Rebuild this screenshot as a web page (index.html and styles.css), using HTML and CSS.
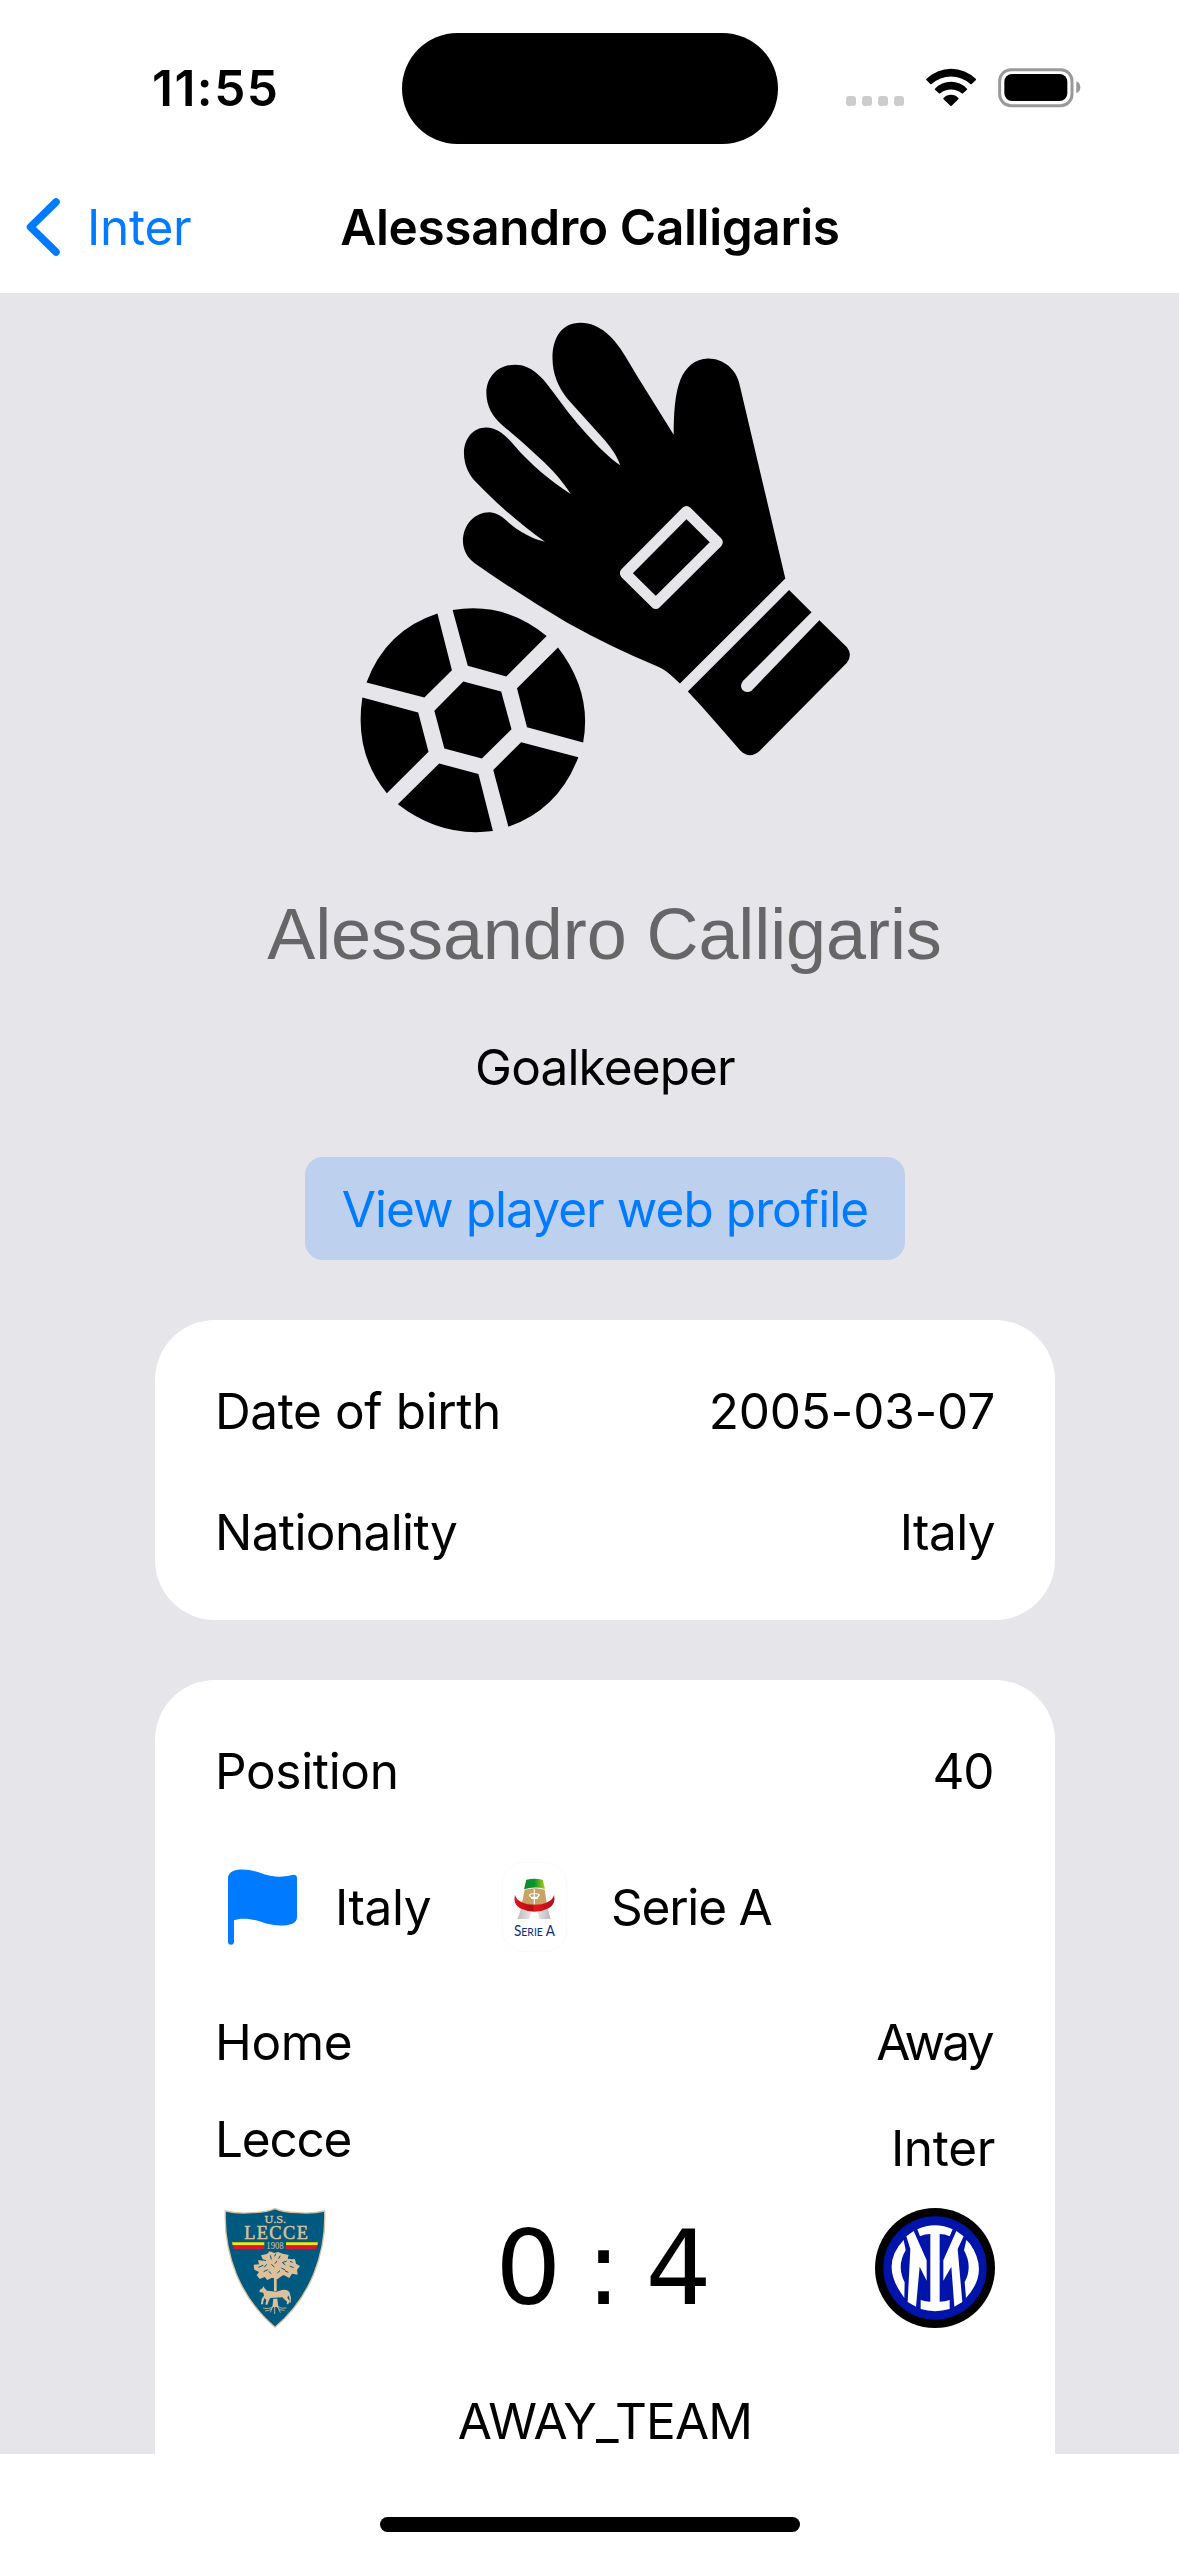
FILE: index.html
```html
<!DOCTYPE html>
<html lang="en">
<head>
<meta charset="utf-8">
<title>Alessandro Calligaris</title>
<link rel="stylesheet" href="styles.css">
</head>
<body>
<div class="screen">
  <header>
    <div class="status">
      <span class="time">11:55</span>
      <span class="island"></span>
      <div class="indicators">
        <svg class="dots" viewBox="48 54 174 120"><rect x="48" y="138" width="30" height="30" rx="9"/><rect x="96" y="138" width="30" height="30" rx="9"/><rect x="144" y="138" width="30" height="30" rx="9"/><rect x="192" y="138" width="30" height="30" rx="9"/></svg>
        <svg class="wifi" viewBox="289 54 151 120"><path d="M290 87A106 106 0 0 1 439 87Q440 88 439 90L426 102Q424 104 422 102A87 87 0 0 0 306 102Q304 104 302 102L290 90Q289 88 290 87ZM316 116A66 66 0 0 1 412 116Q414 117 412 119L400 130Q398 132 396 130A51 51 0 0 0 332 130Q330 132 328 130L316 119Q314 117 316 116ZM342 144A30 30 0 0 1 386 144Q388 146 386 148L366 167Q364 169 362 167L342 148Q340 146 342 144Z"/></svg>
        <svg class="battery" viewBox="506 54 249 120"><rect class="shell" x="511" y="59" width="217" height="108" rx="34"/><rect x="525" y="72" width="189" height="81" rx="23"/><path class="nub" d="M741 94Q753 99 753 112Q753 125 741 130Z"/></svg>
      </div>
    </div>
    <nav class="nav">
      <a class="back"><svg class="chevron" viewBox="0 0 34 58"><path d="M30 4 4.500 29 30 54"/></svg><span>Inter</span></a>
      <h1 class="title">Alessandro Calligaris</h1>
    </nav>
  </header>

  <main>
    <div class="content">
      <svg class="portrait" viewBox="0 0 1568 1568" preserveAspectRatio="none">
        <path d="M987 1074L1293 780L1160 236C1152 195 1113 164 1069 164C1030 164 1003 190 989 222C972 262 969 320 969 377L864 215L828 157C798 108 755 64 699 64C642 64 617 108 617 163C617 205 633 243 659 275L769 393C788 415 805 438 814 463C783 443 748 409 716 375C680 337 646 294 616 254C590 218 556 181 509 181C458 181 425 216 425 260C425 297 443 328 473 352C510 381 547 413 585 447C616 475 647 507 670 543C616 511 550 457 507 408C484 382 458 357 424 357C387 357 360 388 360 429C360 462 375 490 394 509C450 566 520 625 595 677C560 670 512 645 485 619C469 604 451 594 434 594C391 594 357 629 357 675C357 699 370 723 391 737Q520 824 660 904Q790 974 919 1025C945 1034 967 1056 987 1074Z"/>
        <path class="patch" d="M1006 592L1096 678L917 850L828 765Z"/>
        <path d="M1304 812L1369 874L1170 1067Q1160 1079 1168 1091Q1180 1103 1195 1094L1392 897L1472 972Q1489 992 1472 1016L1219 1262Q1190 1287 1163 1262L1085 1176Q1048 1134 1010 1096Z"/>
        <path d="M327 868Q480 844 600 941L483 1054L371 1024ZM283 878L325 1037L245 1113L77 1071Q133 925 283 878ZM65 1113L227 1155L257 1265L136 1381Q40 1268 65 1113ZM168 1412L288 1298L402 1327L444 1487Q294 1506 168 1412ZM489 1475L445 1316L526 1238L692 1280Q635 1426 489 1475ZM706 1239L543 1196L514 1087L633 973Q733 1098 706 1239ZM358 1068L468 1096L498 1202L412 1284L303 1256L274 1150Z"/>
      </svg>
      <h2 class="name">Alessandro Calligaris</h2>
      <p class="role">Goalkeeper</p>
      <a class="profile">View player web profile</a>

      <section class="card bio">
        <div class="row"><span class="dob">Date of birth</span><span class="date">2005-03-07</span></div>
        <div class="row"><span class="nationality">Nationality</span><span class="nation">Italy</span></div>
      </section>

      <section class="card game">
        <div class="row"><span class="label">Position</span><span class="shirt">40</span></div>
        <div class="league">
          <svg class="flag" viewBox="39 43 207 228"><path d="M57 197V261Q56 270 48 270Q39 270 39 261V70Q39 56 55 49C80 39 116 47 139 56C169 68 202 69 227 62Q246 56 246 71V186Q246 201 232 207C205 217 169 212 140 202C111 192 77 188 57 197Z"/></svg>
          <span class="country">Italy</span>
          <svg class="serie" viewBox="7 8 195 270">
            <defs><linearGradient id="green"><stop offset="0" stop-color="#16852f"/><stop offset=".5" stop-color="#09972f"/><stop offset="1" stop-color="#b9cd16"/></linearGradient><linearGradient id="red"><stop offset="0" stop-color="#e31218"/><stop offset=".45" stop-color="#b90d12"/><stop offset=".5" stop-color="#e5161b"/><stop offset="1" stop-color="#b20e14"/></linearGradient><linearGradient id="grey"><stop offset="0" stop-color="#bbb"/><stop offset=".4" stop-color="#e5e5e8"/><stop offset=".6" stop-color="#e5e5e8"/><stop offset="1" stop-color="#b5b6ba"/></linearGradient></defs>
            <rect class="plate" x="8" y="9" width="193" height="268" rx="65"/>
            <path fill="url(#grey)" d="M65 145H98L88 179H54ZM112 145H143L153 179H119Z"/>
            <path fill="#c7a367" d="M75 91Q105 82 135 91L141 130Q106 147 67 130Z"/>
            <path fill="url(#green)" d="M80 61Q105 55 129 61L136 89Q105 80 73 90Z"/>
            <path fill="url(#red)" d="M46 106C53 146 157 146 163 106Q170 132 147 147Q105 168 61 147Q39 132 46 106Z"/>
            <path class="lace" d="M104 90V135M89 106Q104 99 119 106Q112 119 104 112Q94 119 89 106M94 117H115"/>
            <text class="serie-name" x="43" y="231" textLength="123" lengthAdjust="spacingAndGlyphs">S<tspan class="small">ERIE</tspan> A</text>
          </svg>
          <span class="competition">Serie A</span>
        </div>
        <div class="row sides"><span class="label">Home</span><span class="away">Away</span></div>
        <div class="match">
          <div class="team">
            <span class="lecce">Lecce</span>
            <svg class="crest" viewBox="15 53 360 360">
              <path class="shield" d="M46 62Q83 71 127 67Q171 66 195 55Q219 66 263 67Q307 71 344 62Q348 160 311 252Q271 347 195 411Q119 347 79 252Q42 160 46 62Z"/>
              <text class="us" x="196" y="99" textLength="65" lengthAdjust="spacingAndGlyphs">U.S.</text>
              <text class="town" x="198" y="145" textLength="191" lengthAdjust="spacing">LECCE</text>
              <path fill="#f5e900" d="M66 156H163V165H68ZM228 156H324L322 165H228Z"/><path fill="#dc1632" d="M68 165H163V177H71ZM228 165H322L319 177H228Z"/>
              <text class="year" x="195" y="177" textLength="52" lengthAdjust="spacingAndGlyphs">1908</text>
              <path class="tree" d="M153 195l18-4 8-8 14 5 11-3 14 5 18 4-3 12 22 1 3 13 12 7-9 12 2 14-17-3-8 13-17-9-10 6-9 7-16-5-14 7-8-9-15 6-9-11 7-10-14-7-2-15 16-1-3-13 16 2z"/>
              <path class="tree" d="M192 245H200V303H192ZM190 325H202L205 350H187Z"/>
              <path class="tree" d="M149 299L157 294L160 288L164 294L171 301L199 304L216 299Q233 296 239 307Q245 321 242 337H239Q240 325 235 315L232 322L239 332L235 342H230L231 334L223 327L217 321L181 323L177 330L172 343H166L169 329L163 323L159 337L160 342H153L155 326L162 316L160 307L149 305Z"/>
              <path class="roots" d="M188 348Q178 358 159 353M190 349Q180 363 165 362M194 347V371M199 348Q210 363 224 360M201 347Q213 357 229 353M187 351L181 366M204 351L211 367"/>
              <path class="notches" d="M154 207l14 4M181 195l3 12M211 196l-5 9M230 212l-13 5M145 231l15-6M184 222l9 8M214 233l12 6M239 227l12 5M161 244l12-6M201 212l-6 8M202 248l8-7M235 246l-10-4M170 222l-7 9M197 190l-3 8M176 243l8 7M218 217l8 7M240 213l8 3"/>
            </svg>
          </div>
          <span class="score">0 : 4</span>
          <div class="team right">
            <span class="label">Inter</span>
            <svg class="crest" viewBox="45 53 360 360">
              <circle cx="225" cy="233" r="180"/><circle class="disc" cx="225" cy="233" r="155"/>
              <path class="mono" d="M172 117Q225 92 278 117L269 138Q254 131 239 131V334Q254 334 269 329V356Q225 369 182 356V329Q196 334 211 334V131Q195 131 180 138ZM139 138L161 122L200 210V271L179 229L168 349L143 335L151 176ZM311 138L289 122L250 210V271L274 229L283 349L307 335L293 176ZM131 149Q64 219 121 305L133 323L134 276Q109 226 137 180ZM319 149L312 180Q339 229 314 276L318 323Q389 245 330 160Z"/>
            </svg>
          </div>
        </div>
        <p class="winner">AWAY_TEAM</p>
      </section>
    </div>
  </main>
  <footer><span class="home-bar"></span></footer>
</div>
</body>
</html>
```
FILE: styles.css
```css
* { box-sizing: border-box; }
body { margin: 0; background: #fff; color: #000; font: 400 49.5px/60px Inter, "Liberation Sans", sans-serif; }
h1, h2, p { margin: 0; font-weight: 400; }
svg { display: block; flex: none; }
.screen { width: 1179px; height: 2556px; display: flex; flex-direction: column; overflow: hidden; }

/* status bar and navigation */
header { height: 293px; flex: none; }
.status { height: 144px; padding-top: 33px; padding-left: 152px; display: flex; align-items: center; }
.time { width: 250px; margin-top: -1px; font-weight: 600; letter-spacing: 1.5px; }
.island { width: 376px; height: 111px; border-radius: 56px; background: #000; }
.indicators { display: flex; margin: -1px 0 0 68px; }
.dots { width: 58px; height: 40px; fill: #ccc; }
.wifi { width: 50.300px; height: 40px; margin-left: 22px; }
.battery { width: 83px; height: 40px; margin-left: 22px; }
.shell { fill: none; stroke: #999; stroke-width: 9; }
.nub { fill: #999; }
.nav { height: 149px; padding: 16px 26px 0; display: grid; grid-template-columns: 1fr auto 1fr; align-items: center; }
.back { display: flex; align-items: center; gap: 27px; color: #007aff; letter-spacing: -.28px; }
.chevron { width: 34px; height: 58px; fill: none; stroke: #007aff; stroke-width: 7.500; stroke-linecap: round; stroke-linejoin: round; }
.title { font-size: 49.5px; font-weight: 600; letter-spacing: -.36px; margin-left: 1px; }

/* player */
main { height: 2161px; flex: none; background: #e5e5ea; overflow: hidden; }
.content { width: 900px; margin-left: 155px; padding-top: 7px; display: flex; flex-direction: column; align-items: center; }
.portrait { width: 540px; height: 560px; margin-left: 10px; }
.patch { fill: none; stroke: #e5e5ea; stroke-width: 31; stroke-linejoin: round; }
.name { margin: 32px 1px 0 0; font: 72px/84px "Liberation Sans", Arial, sans-serif; letter-spacing: -.09px; color: #666; }
.role { margin-top: 61px; letter-spacing: -.87px; }
.profile { margin-top: 60px; width: 600px; height: 103px; padding-top: 22px; border-radius: 18px; background: #bdd1ef; color: #007aff; text-align: center; letter-spacing: -.93px; }

/* cards */
.card { width: 900px; margin-top: 60px; padding: 61px 60px 0; border-radius: 60px; background: #fff; }
.bio { height: 300px; display: flex; flex-direction: column; gap: 61px; }
.game { height: 900px; }
.row { display: flex; justify-content: space-between; }
.label { letter-spacing: -.33px; }
.dob { letter-spacing: -.4px; }
.date { letter-spacing: -.2px; }
.nationality { letter-spacing: -.61px; }
.nation { letter-spacing: -.6px; }
.shirt { letter-spacing: -1.4px; padding-right: 2px; }
.league { height: 90px; margin-top: 61px; padding-left: 13px; display: flex; align-items: center; }
.flag { width: 69px; height: 76px; fill: #007aff; }
.country { width: 167px; margin-left: 38px; letter-spacing: -.45px; }
.serie { width: 65px; height: 90px; }
.plate { fill: #fff; stroke: #f6f6f6; stroke-width: 2; }
.lace { fill: none; stroke: #fff; stroke-width: 3.500; }
.serie-name { font: 44px Lato, sans-serif; fill: #0b2f80; }
.small { font-size: 34px; }
.competition { margin: -1px 0 0 44px; letter-spacing: -1.22px; }
.sides { margin-top: 60px; }
.away { letter-spacing: -2.6px; padding-right: 3px; }
.match { margin-top: 37px; display: flex; justify-content: space-between; align-items: flex-end; }
.team { width: 150px; display: flex; flex-direction: column; gap: 39px; }
.right { align-items: flex-end; gap: 30px; }
.lecce { letter-spacing: -1.23px; }
.crest { width: 120px; height: 120px; }
.score { margin-right: 3px; font: 104px/120px "DejaVu Sans", Verdana, sans-serif; word-spacing: -8.500px; white-space: nowrap; }
.winner { margin-top: 63px; text-align: center; letter-spacing: -.82px; }

/* club crests */
.shield { fill: #005a80; stroke: #dcc09a; stroke-width: 4; }
.us, .town, .year { fill: #dcc09a; font-family: "Liberation Serif", serif; text-anchor: middle; }
.us { font-size: 33px; stroke: #dcc09a; }
.town { font-size: 55px; stroke: #dcc09a; stroke-width: 1.500; }
.year { font-size: 29px; }
.tree { fill: #dcc09a; }
.roots { fill: none; stroke: #dcc09a; stroke-width: 2.500; }
.notches { fill: none; stroke: #005a80; stroke-width: 3; }
.disc { fill: #0014aa; }
.mono { fill: #fff; }

footer { height: 102px; flex: none; padding-top: 63px; display: flex; justify-content: center; }
.home-bar { width: 420px; height: 15px; border-radius: 8px; background: #000; }
```
